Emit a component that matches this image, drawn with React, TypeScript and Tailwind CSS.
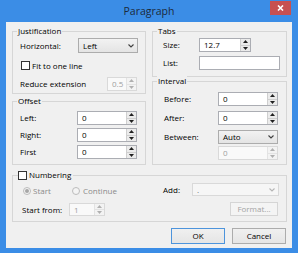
import React from "react";

const Up = ({ c }: { c: string }) => (
  <svg width="5" height="3" viewBox="0 0 5 3">
    <path d="M0 3L2.5 0L5 3Z" fill={c} />
  </svg>
);

const Down = ({ c }: { c: string }) => (
  <svg width="5" height="3" viewBox="0 0 5 3">
    <path d="M0 0L2.5 3L5 0Z" fill={c} />
  </svg>
);

const Chevron = ({ c }: { c: string }) => (
  <svg width="6" height="4" viewBox="0 0 6 4">
    <path d="M0.5 0.5L3 3L5.5 0.5" fill="none" stroke={c} strokeWidth="1.1" />
  </svg>
);

const Spin = ({ value, w, h = "h-[14px]", disabled = false }: { value: string; w: string; h?: string; disabled?: boolean }) => (
  <div
    className={`flex ${w} ${h} border ${
      disabled ? "border-[#d9d9d9] bg-[#f9f9f9] text-[#9e9e9e]" : "border-[#abadb3] bg-white text-black"
    }`}
  >
    <div className="flex flex-1 items-center pl-[4px]">{value}</div>
    <div className={`flex w-[10px] flex-col border-l ${disabled ? "border-[#e3e3e3] bg-[#f3f3f3]" : "border-[#cfcfcf] bg-[#ebebeb]"}`}>
      <div className={`flex flex-1 items-center justify-center border-b ${disabled ? "border-[#e3e3e3]" : "border-[#cfcfcf]"}`}>
        <Up c={disabled ? "#b0b0b0" : "#202020"} />
      </div>
      <div className="flex flex-1 items-center justify-center">
        <Down c={disabled ? "#b0b0b0" : "#202020"} />
      </div>
    </div>
  </div>
);

const Select = ({ value, w, h }: { value: string; w: string; h: string }) => (
  <div className={`flex ${w} ${h} items-center border border-[#acacac] bg-linear-to-b from-[#f2f2f2] to-[#e4e4e4] pr-[3px]`}>
    <span className="flex-1 pl-[4px]">{value}</span>
    <Chevron c="#404040" />
  </div>
);

const Check = () => <span className="h-[9px] w-[9px] shrink-0 border border-[#333333] bg-white" />;

const Radio = ({ checked = false }: { checked?: boolean }) => (
  <span className="flex h-[8px] w-[8px] shrink-0 items-center justify-center rounded-full border border-[#bcbcbc] bg-[#f4f4f4]">
    {checked && <span className="h-[4px] w-[4px] rounded-full bg-[#a6a6a6]" />}
  </span>
);

const Group = ({ title, className, children }: { title: string; className: string; children?: React.ReactNode }) => (
  <div className={`relative border border-[#d6d6d6] ${className}`}>
    <span className="absolute left-[4px] top-[-6px] bg-[#f0f0f0] px-[1px] leading-[10px]">{title}</span>
    {children}
  </div>
);

export default function App() {
  return (
    <div className="flex h-[253px] w-[298px] flex-col bg-[#3b8de6] font-['Segoe_UI','Open_Sans',sans-serif] text-[8px] leading-none text-black">
      <div className="relative flex h-[22px] shrink-0 items-center justify-center">
        <span className="text-[10.5px] text-[#1c2a3a]">Paragraph</span>
        <div className="absolute right-[7px] top-[1px] flex h-[14px] w-[21px] items-center justify-center bg-[#c75050]">
          <svg width="7" height="6" viewBox="0 0 7 6">
            <path d="M1 0.5L6 5.5M6 0.5L1 5.5" stroke="#fff" strokeWidth="1.6" />
          </svg>
        </div>
      </div>

      <div className="mx-[6px] flex h-[226px] flex-col bg-[#f0f0f0] pl-[6px] pr-[5px] pt-[9px]">
        <div className="flex gap-[6px]">
          <div className="flex w-[134px] flex-col gap-[7px]">
            <Group title="Justification" className="h-[63px]">
              <div className="flex flex-col pl-[7px] pt-[6px]">
                <div className="flex items-center">
                  <span className="w-[58px]">Horizontal:</span>
                  <Select value="Left" w="w-[60px]" h="h-[15px]" />
                </div>
                <div className="mt-[8px] flex items-center pl-[1px]">
                  <Check />
                  <span className="ml-[2px]">Fit to one line</span>
                </div>
                <div className="mt-[7px] flex items-center">
                  <span className="w-[87px]">Reduce extension</span>
                  <Spin value="0.5" w="w-[30px]" disabled />
                </div>
              </div>
            </Group>
            <Group title="Offset" className="h-[64px]">
              <div className="flex flex-col gap-[3px] pl-[7px] pt-[9px]">
                {["Left:", "Right:", "First"].map((l) => (
                  <div key={l} className="flex items-center">
                    <span className="w-[57px]">{l}</span>
                    <Spin value="0" w="w-[60px]" />
                  </div>
                ))}
              </div>
            </Group>
          </div>

          <div className="flex w-[135px] flex-col gap-[4px]">
            <Group title="Tabs" className="h-[46px]">
              <div className="flex flex-col gap-[4px] pl-[10px] pt-[6px]">
                <div className="flex items-center">
                  <span className="w-[36px]">Size:</span>
                  <Spin value="12.7" w="w-[52px]" />
                </div>
                <div className="flex items-center">
                  <span className="w-[36px]">List:</span>
                  <div className="h-[14px] w-[81px] border border-[#abadb3] bg-white" />
                </div>
              </div>
            </Group>
            <Group title="Interval" className="h-[84px]">
              <div className="flex flex-col pl-[11px] pt-[10px]">
                <div className="flex items-center">
                  <span className="w-[54px]">Before:</span>
                  <Spin value="0" w="w-[60px]" />
                </div>
                <div className="mt-[5px] flex items-center">
                  <span className="w-[54px]">After:</span>
                  <Spin value="0" w="w-[60px]" />
                </div>
                <div className="mt-[5px] flex items-center">
                  <span className="w-[54px]">Between:</span>
                  <Select value="Auto" w="w-[60px]" h="h-[14px]" />
                </div>
                <div className="ml-[54px] mt-[2px]">
                  <Spin value="0" w="w-[60px]" disabled />
                </div>
              </div>
            </Group>
          </div>
        </div>

        <div className="relative mt-[10px] flex h-[47px] border border-[#d6d6d6]">
          <div className="absolute left-[5px] top-[-6px] flex h-[10px] items-center bg-[#f0f0f0] pr-[2px]">
            <Check />
            <span className="ml-[2px]">Numbering</span>
          </div>
          <div className="flex flex-col pl-[9px] pt-[10px]">
            <div className="flex h-[10px] items-center pl-[1px] text-[#8a8a8a]">
              <div className="flex w-[49px] items-center">
                <Radio checked />
                <span className="ml-[2px]">Start</span>
              </div>
              <div className="flex items-center">
                <Radio />
                <span className="ml-[3px]">Continue</span>
              </div>
            </div>
            <div className="mt-[7px] flex items-center">
              <span className="w-[47px]">Start from:</span>
              <Spin value="1" w="w-[36px]" h="h-[13px]" disabled />
            </div>
          </div>
          <div className="ml-auto flex flex-col items-end pr-[7px] pt-[7px]">
            <div className="flex items-center">
              <span className="mr-[12px]">Add:</span>
              <div className="flex h-[13px] w-[87px] items-center border border-[#d9d9d9] bg-[#f6f6f6] pr-[3px] text-[#6d6d6d]">
                <span className="flex-1 pl-[4px]">.</span>
                <Chevron c="#b5b5b5" />
              </div>
            </div>
            <div className="mr-[1px] mt-[6px] flex h-[14px] w-[48px] items-center justify-center border border-[#d5d5d5] bg-[#f4f4f4] text-[#a3a3a3]">
              Format...
            </div>
          </div>
        </div>

        <div className="mt-[6px] flex justify-end gap-[7px] pr-[1px]">
          <div className="flex h-[16px] w-[54px] items-center justify-center border border-[#4d94dc] bg-linear-to-b from-[#f0f0f0] to-[#e5e5e5]">
            OK
          </div>
          <div className="flex h-[16px] w-[54px] items-center justify-center border border-[#acacac] bg-linear-to-b from-[#f0f0f0] to-[#e5e5e5]">
            Cancel
          </div>
        </div>
      </div>
    </div>
  );
}
